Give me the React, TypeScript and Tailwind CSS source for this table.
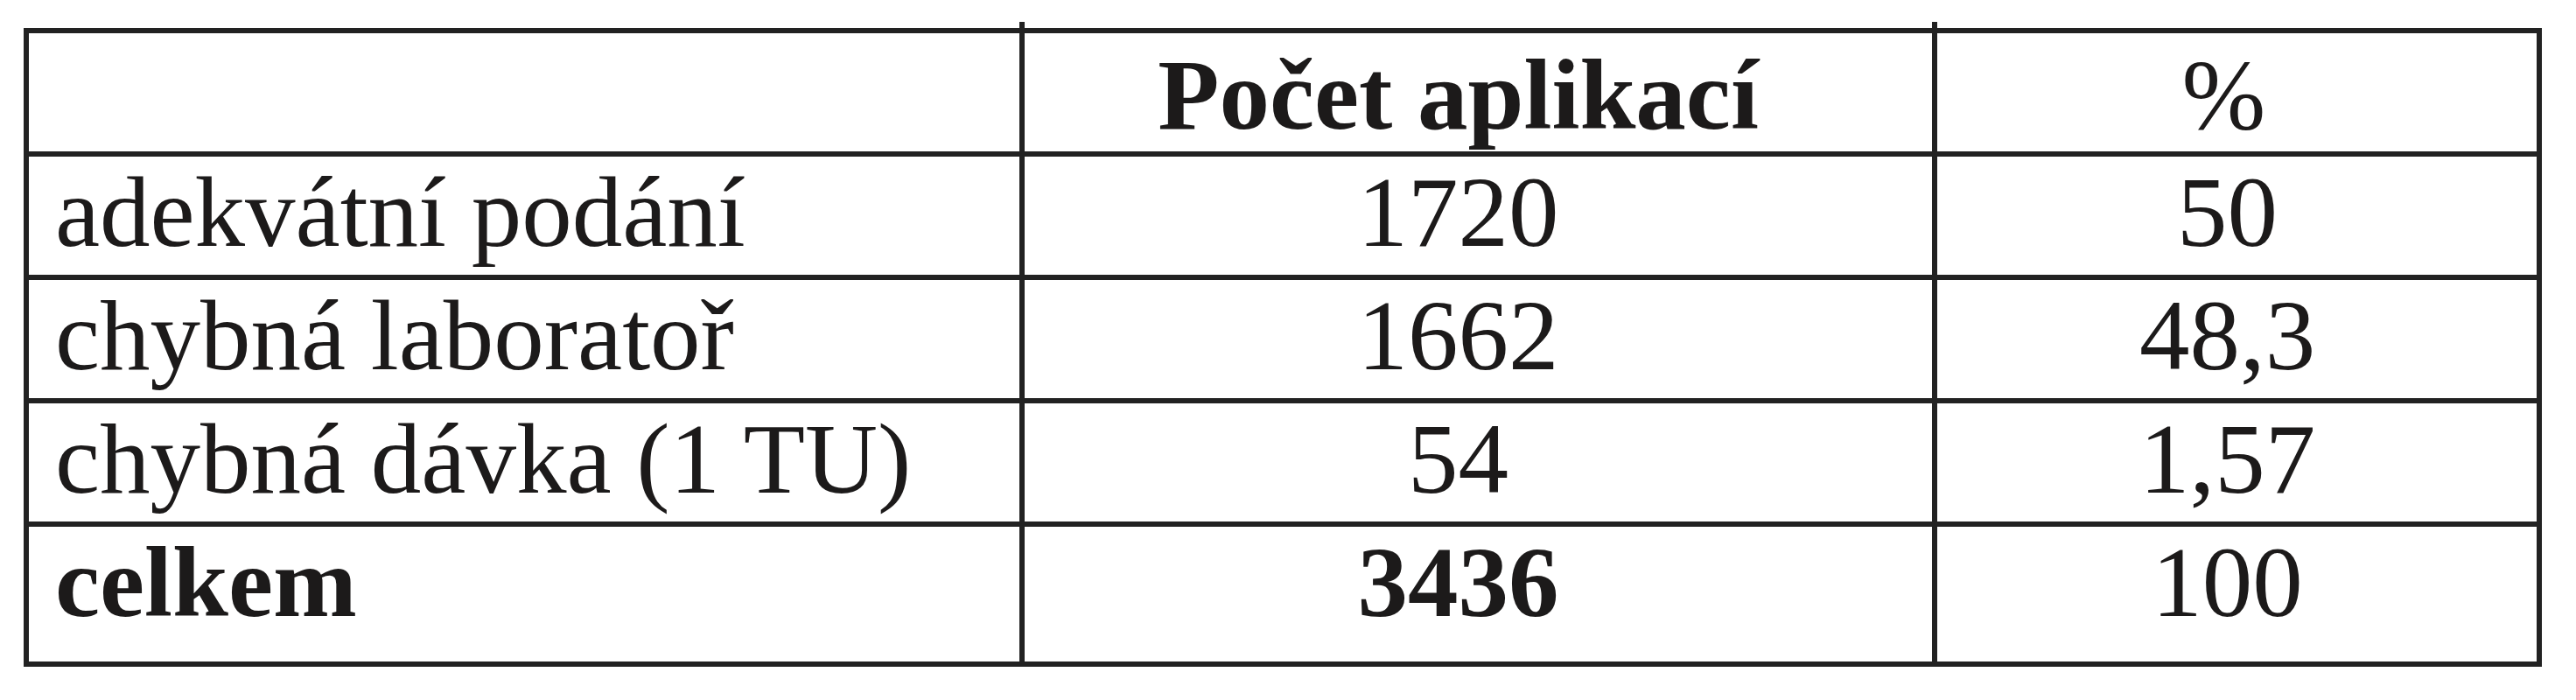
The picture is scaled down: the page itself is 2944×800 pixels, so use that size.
import { FC } from "react";

type Row = {
  label: string;
  count: string;
  percent: string;
  bold?: boolean;
  last?: boolean;
};

const rows: Row[] = [
  { label: "adekvátní podání", count: "1720", percent: "50" },
  { label: "chybná laboratoř", count: "1662", percent: "48,3" },
  { label: "chybná dávka (1 TU)", count: "54", percent: "1,57" },
  { label: "celkem", count: "3436", percent: "100", bold: true, last: true },
];

const App: FC = () => {
  return (
    <main className="min-h-[800px] w-[2944px] bg-white pl-[27px] pt-[32px] font-['Liberation_Serif','Times_New_Roman',serif] text-[115px] leading-[115px] text-[#1c1a1a]">
      <div className="w-[2878px] border-[6px] border-[#222]">
        {/* Header */}
        <div className="grid h-[135px] grid-cols-[1132px_1043px_691px]">
          <div />
          <div className="relative flex justify-center border-l-[6px] border-[#222] pr-[46px] pt-[13px] font-bold">
            <span className="absolute -left-[6px] -top-[13px] h-[8px] w-[6px] bg-[#222]" />
            Počet aplikací
          </div>
          <div className="relative flex justify-center border-l-[6px] border-[#222] pr-[30px] pt-[13px]">
            <span className="absolute -left-[6px] -top-[13px] h-[8px] w-[6px] bg-[#222]" />
            %
          </div>
        </div>

        {/* Body rows */}
        {rows.map((row) => (
          <div
            key={row.label}
            className={
              row.last
                ? "grid h-[160px] grid-cols-[1132px_1043px_691px] border-t-[6px] border-[#222] pt-[6px]"
                : "grid h-[141px] grid-cols-[1132px_1043px_691px] border-t-[6px] border-[#222] pt-[6px]"
            }
          >
            <div className={row.bold ? "pl-[30px] font-bold" : "pl-[30px]"}>
              {row.label}
            </div>
            <div
              className={
                row.bold
                  ? "-mt-[6px] flex justify-center border-l-[6px] border-[#222] pr-[46px] pt-[6px] font-bold"
                  : "-mt-[6px] flex justify-center border-l-[6px] border-[#222] pr-[46px] pt-[6px]"
              }
            >
              {row.count}
            </div>
            <div className="-mt-[6px] flex justify-center border-l-[6px] border-[#222] pr-[22px] pt-[6px]">
              {row.percent}
            </div>
          </div>
        ))}
      </div>
    </main>
  );
};

export default App;
